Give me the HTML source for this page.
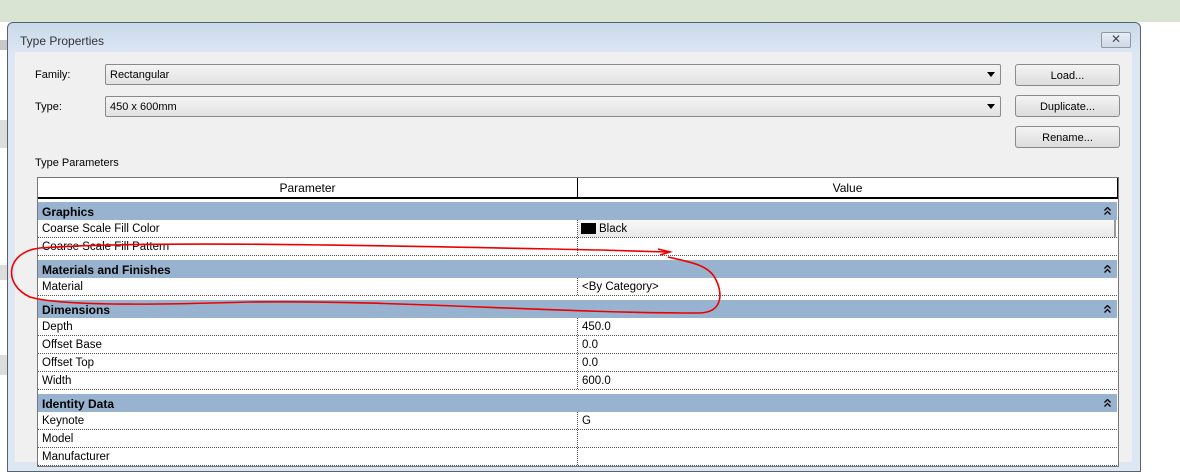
<!DOCTYPE html>
<html><head><style>
*{margin:0;padding:0;box-sizing:border-box}
body{width:1180px;height:459px;overflow:hidden;background:#fff;font-family:"Liberation Sans",sans-serif;font-size:11px;color:#000;position:relative}
.a{position:absolute}
.combo{position:absolute;left:105px;width:896px;height:21px;border:1px solid #8a8a8a;border-radius:2px;background:linear-gradient(#f4f4f4,#e2e2e2);padding:4px 0 0 4px}
.combo:after{content:"";position:absolute;right:5px;top:7px;border-left:4px solid transparent;border-right:4px solid transparent;border-top:5px solid #000}
.btn{position:absolute;left:1015px;width:105px;height:22px;border:1px solid #8a8a8a;border-radius:3px;background:linear-gradient(#f4f4f4,#dcdcdc);text-align:center;padding-top:5px}
.row{position:absolute;left:38px;width:1079px;height:18px;background:#fff;border-bottom:1px dotted #555;font-size:11.5px}
.row span{position:absolute;left:4px;top:3px}
.row b{font-weight:normal;position:absolute;left:544px;top:3px}
.row i{position:absolute;left:539px;top:0;bottom:0;border-left:1px dotted #555}
.band{position:absolute;left:38px;width:1079px;height:18px;background:#98b3cf;font-weight:bold;font-size:12px}
.band span{position:absolute;left:4px;top:3px}
.band svg{position:absolute;right:6px;top:5px}
</style></head><body>
<div class="a" style="left:0;top:0;width:1180px;height:22px;background:#dae4d3"></div>
<div class="a" style="left:0;top:22px;width:8px;height:437px;background:#fff"></div>
<div class="a" style="left:0;top:40px;width:8px;height:10px;background:#c8c8c8"></div>
<div class="a" style="left:0;top:120px;width:8px;height:28px;background:#ddd"></div>
<div class="a" style="left:0;top:265px;width:8px;height:15px;background:#ddd"></div>
<div class="a" style="left:0;top:355px;width:8px;height:20px;background:#ddd"></div>
<div class="a" style="left:7px;top:22px;width:1134px;height:450px;border:1px solid #5a6270;border-radius:6px 6px 0 0;background:linear-gradient(#c9d8ea,#dce7f3 30px,#dce7f3)"></div>
<div class="a" style="left:20px;top:34px;font-size:12px;color:#333">Type Properties</div>
<div class="a" style="left:1101px;top:32px;width:30px;height:16px;border:1px solid #8d99a8;border-radius:2px;background:linear-gradient(#e8eef5,#cdd7e3);text-align:center;font-size:12px;color:#445;line-height:13px">✕</div>
<div class="a" style="left:15px;top:52px;width:1117px;height:410px;background:#f0f0f0"></div>
<div class="a" style="left:35px;top:69px">Family:</div>
<div class="a" style="left:35px;top:101px">Type:</div>
<div class="combo" style="top:64px">Rectangular</div>
<div class="combo" style="top:96px">450 x 600mm</div>
<div class="btn" style="top:64px">Load...</div>
<div class="btn" style="top:95px">Duplicate...</div>
<div class="btn" style="top:126px">Rename...</div>
<div class="a" style="left:35px;top:157px">Type Parameters</div>
<div class="a" style="left:37px;top:177px;width:1082px;height:290px;border:1px solid #777;background:#fff"></div>
<div class="a" style="left:38px;top:178px;width:1080px;height:21px;background:#fff;border-bottom:2px solid #000;font-size:12px">
<div class="a" style="left:0;width:539px;text-align:center;top:3px">Parameter</div>
<div class="a" style="left:539px;top:0;height:19px;border-left:1px solid #000;width:541px;text-align:center;padding-top:3px;border-right:1px solid #000">Value</div></div>
<div class="band" style="top:202px"><span>Graphics</span><svg width="7" height="8"><path d="M0.5,3.5 L3.5,0.5 L6.5,3.5 M0.5,7.5 L3.5,4.5 L6.5,7.5" fill="none" stroke="#000" stroke-width="1.3"/></svg></div>
<div class="row" style="top:220px"><span>Coarse Scale Fill Color</span><i></i><div class="a" style="left:540px;top:0;width:538px;height:17px;background:linear-gradient(#f8f8f8,#e8e8e8);border-right:2px solid #999"></div><div class="a" style="left:543px;top:3px;width:15px;height:11px;background:#000"></div><b style="left:561px">Black</b></div>
<div class="row" style="top:238px"><span>Coarse Scale Fill Pattern</span><i></i></div>
<div class="band" style="top:260px"><span>Materials and Finishes</span><svg width="7" height="8"><path d="M0.5,3.5 L3.5,0.5 L6.5,3.5 M0.5,7.5 L3.5,4.5 L6.5,7.5" fill="none" stroke="#000" stroke-width="1.3"/></svg></div>
<div class="row" style="top:278px"><span>Material</span><i></i><b>&lt;By Category&gt;</b></div>
<div class="band" style="top:300px"><span>Dimensions</span><svg width="7" height="8"><path d="M0.5,3.5 L3.5,0.5 L6.5,3.5 M0.5,7.5 L3.5,4.5 L6.5,7.5" fill="none" stroke="#000" stroke-width="1.3"/></svg></div>
<div class="row" style="top:318px"><span>Depth</span><i></i><b>450.0</b></div>
<div class="row" style="top:336px"><span>Offset Base</span><i></i><b>0.0</b></div>
<div class="row" style="top:354px"><span>Offset Top</span><i></i><b>0.0</b></div>
<div class="row" style="top:372px"><span>Width</span><i></i><b>600.0</b></div>
<div class="band" style="top:394px"><span>Identity Data</span><svg width="7" height="8"><path d="M0.5,3.5 L3.5,0.5 L6.5,3.5 M0.5,7.5 L3.5,4.5 L6.5,7.5" fill="none" stroke="#000" stroke-width="1.3"/></svg></div>
<div class="row" style="top:412px"><span>Keynote</span><i></i><b>G</b></div>
<div class="row" style="top:430px"><span>Model</span><i></i></div>
<div class="row" style="top:448px"><span>Manufacturer</span><i></i></div>
<svg class="a" style="left:0;top:0" width="1180" height="459"><path d="M668,252 L600,250 C400,246 150,240 40,248 C5,252 3,285 30,297 C60,306 150,305 250,302 C400,300 550,313 700,313 C725,312 722,290 715,278 C708,265 690,262 668,257 M658,249 L670,252 L660,255" fill="none" stroke="#e00" stroke-width="1.6"/></svg>
</body></html>
